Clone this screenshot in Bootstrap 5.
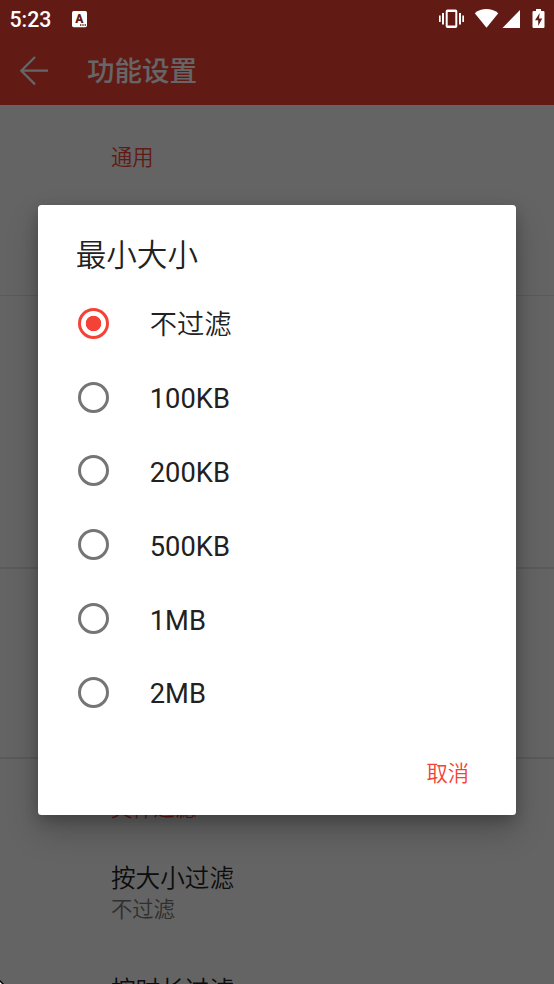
<!DOCTYPE html>
<html lang="zh-CN">
<head>
<meta charset="utf-8">
<meta name="viewport" content="width=device-width, initial-scale=1">
<title>功能设置</title>
<link href="https://cdn.jsdelivr.net/npm/bootstrap@5.3.0/dist/css/bootstrap.min.css" rel="stylesheet">
<style>
body{font-family:Roboto,"Noto Sans CJK SC",sans-serif;background:#fafafa;color:#212121}
.screen{width:554px;height:984px;background:#fafafa}
.app-top{height:104.5px;background:#f44336;padding:38px 0 0 19px}
.app-title{font-size:27.5px;font-weight:500;line-height:66px;padding-top:2px;margin-left:38px}
.group{border-bottom:2px solid #e0e0e0;padding-left:111px}
.g1{height:191.5px;border-bottom-width:1px}.g2{height:273px}.g3{height:190px}
.group-title{font-size:21.3px;line-height:30px;color:#f44336}
.g1 .group-title{padding-top:38px}
.filters{padding:35px 0 0 111px}
.pref{font-size:24.6px;line-height:34px}
.pref-a{margin-top:38px}.pref-b{margin-top:49.5px}
.pref-sub{font-size:21.3px;line-height:28px;color:#757575}
.cjk{font-family:Roboto,"Noto Sans CJK SC DemiLight","Noto Sans CJK SC",sans-serif;font-weight:400}
.scrim{background:rgba(0,0,0,.6);padding:205px 38.5px 0 38.4px}
.dialog{height:610px;border-radius:3.5px;box-shadow:0 16px 32px rgba(0,0,0,.22),0 5px 14px rgba(0,0,0,.2)}
.dialog-title{font-size:30.6px;line-height:44px;padding:29px 0 0 37.3px}
.options{padding-top:8.5px}
.option{height:73.8px;padding-left:40px;gap:40.4px;font-size:27.3px;line-height:38px}
.option span{padding-top:4px}
.option .form-check-input{width:31px;height:31px;border:3.4px solid #757575;box-shadow:none}
.option .form-check-input:checked{border-color:#f44336;background:radial-gradient(circle,#f44336 7.4px,#fff 8.1px)}
.cancel{color:#f44336;font-size:21.3px;line-height:30px;padding:0;margin:30px 46.5px 0 0;border:0}
.statusbar{height:38px;padding:0 8px 0 9.5px;font-size:21.3px}
.clock{padding-top:2px}
.notice{margin-left:15.5px}
.corner{width:4px;height:4px}
</style>
</head>
<body>
<div class="screen position-relative overflow-hidden">
  <header class="app-top d-flex align-items-center text-white">
    <svg width="30" height="30" viewBox="0 0 30 30" fill="none" stroke="#fff" stroke-width="2.2"><path d="M29 14.7H2.5M16 1 2.3 14.7 16 28.4"/></svg>
    <h1 class="app-title mb-0">功能设置</h1>
  </header>
  <main>
    <section class="group g1"><div class="group-title cjk">通用</div></section>
    <section class="group g2"></section>
    <section class="group g3"></section>
    <section class="filters">
      <div class="group-title cjk">文件过滤</div>
      <div class="pref pref-a cjk">按大小过滤</div>
      <div class="pref-sub cjk">不过滤</div>
      <div class="pref pref-b cjk">按时长过滤</div>
    </section>
  </main>
  <div class="scrim position-absolute top-0 start-0 w-100 h-100">
    <div class="dialog bg-white" role="dialog">
      <h2 class="dialog-title cjk mb-0">最小大小</h2>
      <div class="options">
        <label class="option d-flex align-items-center"><input class="form-check-input m-0 flex-shrink-0" type="radio" name="size" checked><span class="cjk">不过滤</span></label>
        <label class="option d-flex align-items-center"><input class="form-check-input m-0 flex-shrink-0" type="radio" name="size"><span>100KB</span></label>
        <label class="option d-flex align-items-center"><input class="form-check-input m-0 flex-shrink-0" type="radio" name="size"><span>200KB</span></label>
        <label class="option d-flex align-items-center"><input class="form-check-input m-0 flex-shrink-0" type="radio" name="size"><span>500KB</span></label>
        <label class="option d-flex align-items-center"><input class="form-check-input m-0 flex-shrink-0" type="radio" name="size"><span>1MB</span></label>
        <label class="option d-flex align-items-center"><input class="form-check-input m-0 flex-shrink-0" type="radio" name="size"><span>2MB</span></label>
      </div>
      <div class="d-flex justify-content-end"><button class="btn cancel cjk" type="button">取消</button></div>
    </div>
  </div>
  <div class="statusbar position-absolute top-0 start-0 w-100 d-flex align-items-center text-white fw-medium">
    <span class="clock">5:23</span>
    <svg class="ms-auto order-1" width="108" height="24" viewBox="0 0 108 24" fill="#fff">
      <path fill-rule="evenodd" d="M9.500 2.500h8a1.800 1.800 0 0 1 1.800 1.800v15a1.800 1.800 0 0 1-1.800 1.800h-8a1.800 1.800 0 0 1-1.800-1.800v-15A1.800 1.800 0 0 1 9.500 2.500zM9.700 5v13.500h7.600V5z"/>
      <path d="M4 6h2v11.500H4zM1 8.500h1.700v6.500H1zM21 6h2v11.500h-2zM24.300 8.500H26v6.500h-1.700z"/>
      <path d="M36.800 6.300C43.300 .7 53.300 .7 60.300 6.300L48.500 20.700z"/>
      <path d="M64.500 21 82 3v18z"/>
      <path d="M98 2h5v2h2.300q1.200 0 1.200 1.200v14.600q0 1.200-1.200 1.200h-9.600q-1.200 0-1.200-1.200V5.200q0-1.200 1.200-1.200H98z"/>
      <path d="M101.700 6 97 13.300h3.200V19l4-7.500h-3.200z" fill="#621b17"/>
    </svg>
    <svg class="notice" width="26" height="17" viewBox="0 0 26 17"><rect x="5" y="0" width="15" height="16.200" rx="1.700" fill="#fff"/><text x="12.300" y="11.700" text-anchor="middle" font-family="Roboto" font-weight="900" font-size="12" fill="#621b17">A</text><path d="M13 14h1.400M15.300 14h1.400M17.600 14H19" stroke="#621b17" stroke-width="1.400"/></svg>
  </div>
  <svg class="corner position-absolute bottom-0 start-0" viewBox="0 0 4 4"><path d="M0 0 4 4H0z"/><path d="M0 2 2 4H0z" fill="#fff"/></svg>
</div>
<script src="https://cdn.jsdelivr.net/npm/bootstrap@5.3.0/dist/js/bootstrap.bundle.min.js"></script>
</body>
</html>
